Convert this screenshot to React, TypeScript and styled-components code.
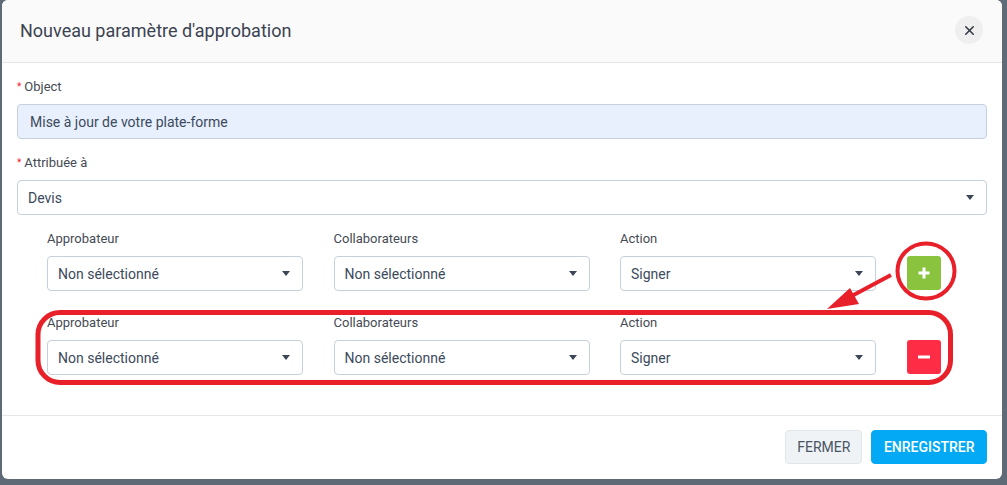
import React from 'react';
import styled, { createGlobalStyle } from 'styled-components';
import { X } from 'lucide-react';

const GlobalStyle = createGlobalStyle`
  html, body {
    margin: 0;
    padding: 0;
    background: #5e6a76;
    font-family: Roboto, "Liberation Sans", Arial, sans-serif;
  }
  * { box-sizing: border-box; }
`;

const Page = styled.div`
  position: relative;
  width: 1007px;
  height: 485px;
  overflow: hidden;
`;

const Modal = styled.div`
  margin-left: 2px;
  width: 1000px;
  background: #ffffff;
  border-radius: 6px;
  overflow: hidden;
`;

const Header = styled.div`
  height: 63px;
  display: flex;
  align-items: center;
  justify-content: space-between;
  padding: 0 18px 2px 18px;
  background: #fafafa;
  border-bottom: 1px solid #e6e6e6;
`;

const Title = styled.h1`
  margin: 0;
  font-size: 18px;
  font-weight: 400;
  color: #3b4351;
`;

const CloseButton = styled.button`
  width: 28px;
  height: 28px;
  border-radius: 50%;
  border: none;
  background: #efefef;
  color: #333a44;
  display: flex;
  align-items: center;
  justify-content: center;
  padding: 0;
  margin-right: 1px;
`;

const Body = styled.div`
  padding: 15px 15px 40px 15px;
`;

const Field = styled.div`
  margin-bottom: 15px;
`;

const Label = styled.div`
  font-size: 13px;
  line-height: 16px;
  color: #454b54;
  margin-bottom: 9px;
  display: flex;
  align-items: center;
`;

const Star = styled.span`
  color: #f5222d;
  font-size: 10px;
  margin-right: 3px;
  padding-top: 1px;
`;

const TextInput = styled.div`
  height: 35px;
  border: 1px solid #c6d0da;
  border-radius: 4px;
  background: #e8f0fe;
  padding: 0 12px;
  display: flex;
  align-items: center;
  font-size: 14px;
  color: #3c4a5c;
`;

const SelectBox = styled.div`
  height: 35px;
  width: 100%;
  border: 1px solid #c6d0da;
  border-radius: 4px;
  background: #ffffff;
  padding: 0 12px 0 10px;
  display: flex;
  align-items: center;
  justify-content: space-between;
  font-size: 14px;
  color: #3c4a5c;
`;

const Caret = styled.span`
  width: 0;
  height: 0;
  border-left: 4.5px solid transparent;
  border-right: 4.5px solid transparent;
  border-top: 5px solid #3c4656;
`;

const Rows = styled.div`
  padding: 1px 0 0 30px;
  display: flex;
  flex-direction: column;
  gap: 24px;
`;

const Row = styled.div`
  display: grid;
  grid-template-columns: 256px 256px 256px 34px;
  column-gap: 30.5px;
  align-items: end;
`;

const Col = styled.div`
  display: flex;
  flex-direction: column;
`;

const RowLabel = styled.div`
  font-size: 13px;
  line-height: 16px;
  color: #454b54;
  margin-bottom: 9px;
`;

const IconButton = styled.button<{ $bg: string }>`
  width: 34px;
  height: 34px;
  margin-bottom: 1px;
  border: none;
  border-radius: 3px;
  background: ${(p) => p.$bg};
  display: flex;
  align-items: center;
  justify-content: center;
  padding: 0;
`;

const Footer = styled.div`
  border-top: 1px solid #e6e6e6;
  height: 64px;
  padding: 0 15px 1px 15px;
  display: flex;
  align-items: center;
  justify-content: flex-end;
  gap: 9px;
`;

const FooterButton = styled.button<{ $primary?: boolean }>`
  height: 34px;
  padding: 0 ${(p) => (p.$primary ? '11.5px' : '11px')};
  border-radius: 4px;
  border: 1px solid ${(p) => (p.$primary ? '#03a9f4' : '#e1e6eb')};
  background: ${(p) => (p.$primary ? '#03a9f4' : '#f0f3f6')};
  color: ${(p) => (p.$primary ? '#ffffff' : '#4a5563')};
  font-family: Roboto, "Liberation Sans", Arial, sans-serif;
  font-size: 14px;
  font-weight: ${(p) => (p.$primary ? 500 : 400)};
  text-transform: uppercase;
`;

const Annotations = styled.svg`
  position: absolute;
  left: 0;
  top: 0;
  pointer-events: none;
`;

const PlusIcon = () => (
  <svg width="12" height="12" viewBox="0 0 12 12">
    <rect x="4.5" y="0.5" width="3" height="11" fill="#fff" />
    <rect x="0.5" y="4.5" width="11" height="3" fill="#fff" />
  </svg>
);

const MinusIcon = () => (
  <svg width="12" height="4" viewBox="0 0 12 4">
    <rect x="0" y="0.5" width="12" height="3" fill="#fff" />
  </svg>
);

function ApproverRow({ add }: { add: boolean }) {
  return (
    <Row>
      <Col>
        <RowLabel>Approbateur</RowLabel>
        <SelectBox>Non sélectionné<Caret /></SelectBox>
      </Col>
      <Col>
        <RowLabel>Collaborateurs</RowLabel>
        <SelectBox>Non sélectionné<Caret /></SelectBox>
      </Col>
      <Col>
        <RowLabel>Action</RowLabel>
        <SelectBox>Signer<Caret /></SelectBox>
      </Col>
      {add ? (
        <IconButton $bg="#8ac43f"><PlusIcon /></IconButton>
      ) : (
        <IconButton $bg="#fe2c45"><MinusIcon /></IconButton>
      )}
    </Row>
  );
}

export default function App() {
  return (
    <Page>
      <GlobalStyle />
      <Modal>
        <Header>
          <Title>Nouveau paramètre d'approbation</Title>
          <CloseButton><X size={15} strokeWidth={2.5} /></CloseButton>
        </Header>
        <Body>
          <Field>
            <Label><Star>*</Star>Object</Label>
            <TextInput>Mise à jour de votre plate-forme</TextInput>
          </Field>
          <Field>
            <Label><Star>*</Star>Attribuée à</Label>
            <SelectBox>Devis<Caret /></SelectBox>
          </Field>
          <Rows>
            <ApproverRow add />
            <ApproverRow add={false} />
          </Rows>
        </Body>
        <Footer>
          <FooterButton>Fermer</FooterButton>
          <FooterButton $primary>Enregistrer</FooterButton>
        </Footer>
      </Modal>
      <Annotations width="1007" height="485" viewBox="0 0 1007 485">
        <ellipse cx="926" cy="271" rx="28.5" ry="27.5" fill="none" stroke="#e8202a" strokeWidth="4" />
        <rect x="38" y="312.5" width="912.5" height="70" rx="22" fill="none" stroke="#e8202a" strokeWidth="5" />
        <line x1="891" y1="275" x2="848" y2="298" stroke="#e8202a" strokeWidth="4" />
        <polygon points="827,309 850,288 859,304" fill="#e8202a" />
      </Annotations>
    </Page>
  );
}
